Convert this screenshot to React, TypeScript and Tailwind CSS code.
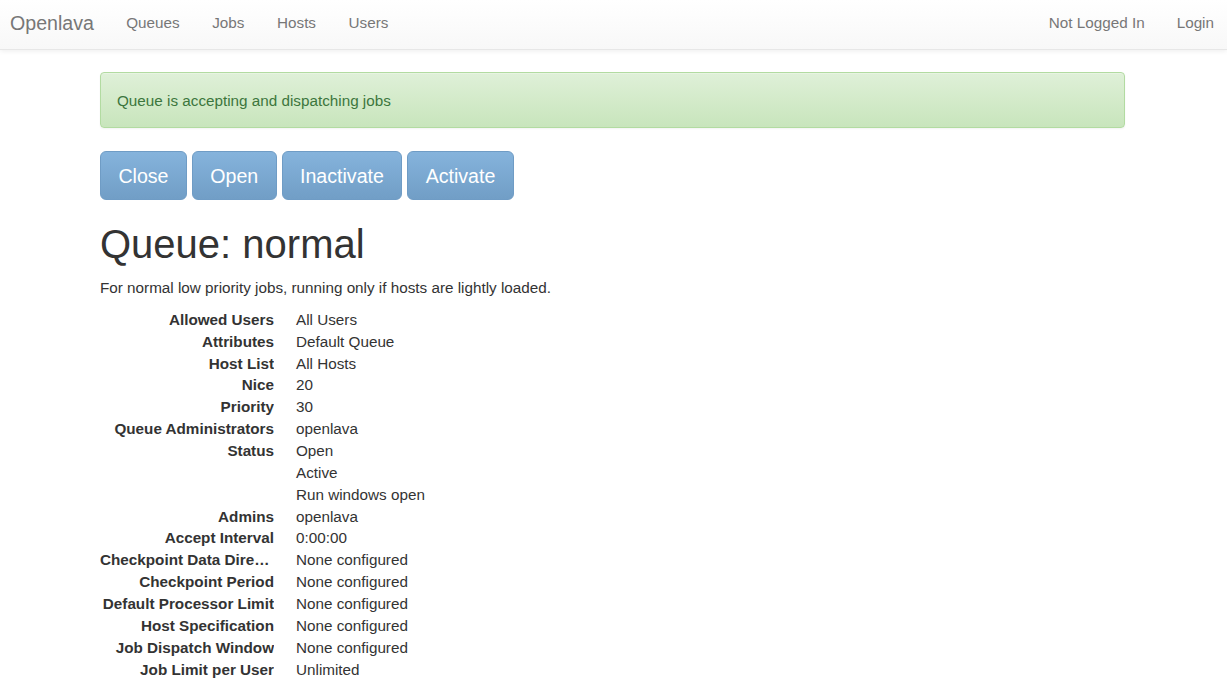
const navLinks = ['Queues', 'Jobs', 'Hosts', 'Users'];

const actions = ['Close', 'Open', 'Inactivate', 'Activate'];

const details: [string, string[]][] = [
  ['Allowed Users', ['All Users']],
  ['Attributes', ['Default Queue']],
  ['Host List', ['All Hosts']],
  ['Nice', ['20']],
  ['Priority', ['30']],
  ['Queue Administrators', ['openlava']],
  ['Status', ['Open', 'Active', 'Run windows open']],
  ['Admins', ['openlava']],
  ['Accept Interval', ['0:00:00']],
  ['Checkpoint Data Directory', ['None configured']],
  ['Checkpoint Period', ['None configured']],
  ['Default Processor Limit', ['None configured']],
  ['Host Specification', ['None configured']],
  ['Job Dispatch Window', ['None configured']],
  ['Job Limit per User', ['Unlimited']],
];

const Navbar = () => (
  <nav className="flex h-[50px] items-center justify-between border-b border-[#e7e7e7] bg-gradient-to-b from-white to-[#f8f8f8] pb-[4px] shadow-[0_1px_5px_rgba(0,0,0,0.075)] text-[#777]">
    <div className="flex items-center pl-[10px]">
      <a className="pr-[16px] text-[19.6px] leading-[22px]">Openlava</a>
      {navLinks.map((link) => (
        <a key={link} className="px-[16.3px] text-[15.26px] leading-[22px]">
          {link}
        </a>
      ))}
    </div>
    <div className="flex items-center pr-[13px] text-[15.26px] leading-[22px]">
      <span className="mr-[32px]">Not Logged In</span>
      <a>Login</a>
    </div>
  </nav>
);

export default function App() {
  return (
    <div className="min-h-screen bg-white font-['Liberation_Sans',Arial,sans-serif] text-[15.26px] leading-[21.86px] text-[#333]">
      <Navbar />
      <div className="pl-[100px] pr-[102px]">
        <div className="mt-[22px] flex h-[56px] items-center rounded-[4px] border border-[#b2dba1] bg-gradient-to-b from-[#dff0d8] to-[#c8e5bc] px-[16px] pt-[1px] text-[#3c763d] shadow-[inset_0_1px_0_rgba(255,255,255,0.25),0_1px_2px_rgba(0,0,0,0.05)]">
          Queue is accepting and dispatching jobs
        </div>

        <div className="mt-[23px] flex gap-[5px]">
          {actions.map((label) => (
            <button
              key={label}
              className="h-[49px] rounded-[6px] border border-[#6f9cc5] bg-gradient-to-b from-[#85b3dc] to-[#719ec6] px-[17.4px] text-[19.6px] leading-[26px] text-white"
            >
              {label}
            </button>
          ))}
        </div>

        <h1 className="mt-[23px] mb-[11px] text-[40px] leading-[43px] font-medium text-[#333]">Queue: normal</h1>
        <p className="mb-[10px]">For normal low priority jobs, running only if hosts are lightly loaded.</p>

        <dl className="grid grid-cols-[174px_1fr] gap-x-[22px]">
          {details.map(([label, values]) => (
            <div key={label} className="contents">
              <dt className="truncate text-right font-bold">{label}</dt>
              <dd>
                {values.map((v) => (
                  <div key={v}>{v}</div>
                ))}
              </dd>
            </div>
          ))}
        </dl>
      </div>
    </div>
  );
}
